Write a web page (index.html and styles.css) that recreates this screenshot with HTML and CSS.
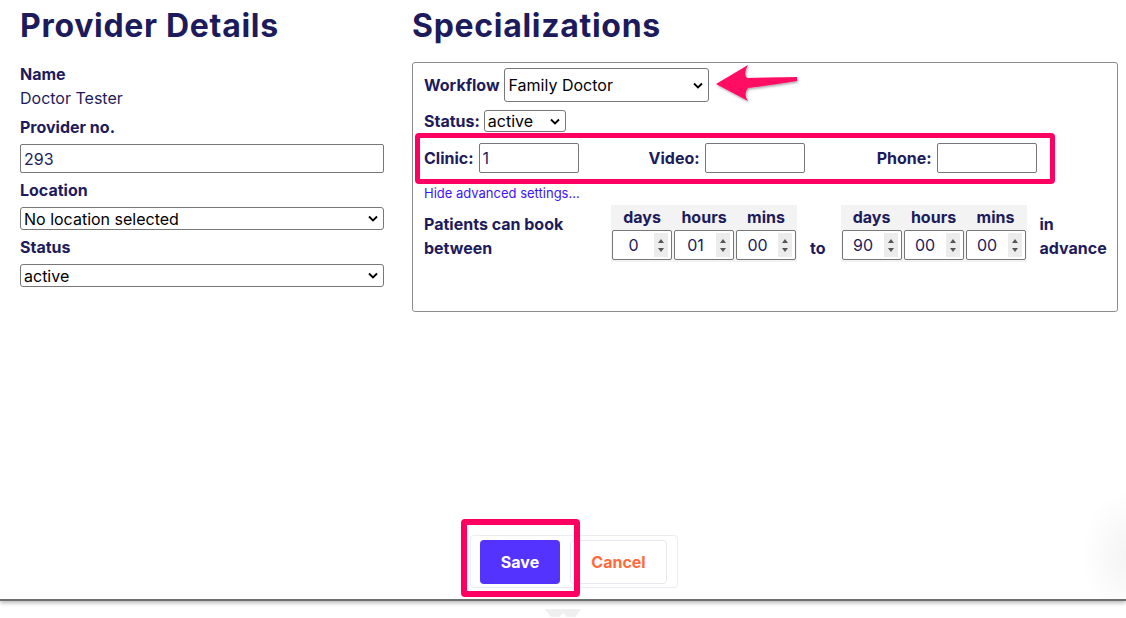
FILE: index.html
```html
<!DOCTYPE html>
<html>
<head>
<meta charset="utf-8">
<link rel="stylesheet" href="styles.css">
</head>
<body>
<div class="sheet">
  <div class="columns">
    <section class="left">
      <h1 class="title">Provider Details</h1>
      <div class="lbl first">Name</div>
      <div class="val">Doctor Tester</div>
      <div class="lbl">Provider no.</div>
      <input class="text-in wide" type="text" value="293">
      <div class="lbl">Location</div>
      <select class="sel wide-sel"><option>No location selected</option></select>
      <div class="lbl">Status</div>
      <select class="sel wide-sel"><option>active</option></select>
    </section>
    <section class="right">
      <h1 class="title">Specializations</h1>
      <div class="spec-box">
        <div class="row workflow-row">
          <span class="lbl-inline">Workflow</span>
          <select class="sel workflow-sel"><option>Family Doctor</option></select>
          <svg class="arrow" width="86" height="42" viewBox="0 0 86 42">
            <defs>
              <filter id="sh" x="-20%" y="-30%" width="140%" height="160%">
                <feDropShadow dx="1" dy="1.5" stdDeviation="1.2" flood-color="#000" flood-opacity="0.35"/>
              </filter>
            </defs>
            <path d="M3,21 L35,2 Q30,11 34,15 L84,14 L84,18 Q60,22 35,25 Q30,31 35,38 Z" fill="#ff0a64" filter="url(#sh)"/>
          </svg>
        </div>
        <div class="row status-row">
          <span class="lbl-inline">Status:</span>
          <select class="sel status-sel"><option>active</option></select>
        </div>
        <div class="highlight-box">
          <div class="field"><span class="lbl-inline">Clinic:</span><input class="text-in small" type="text" value="1"></div>
          <div class="field"><span class="lbl-inline">Video:</span><input class="text-in small" type="text" value=""></div>
          <div class="field"><span class="lbl-inline">Phone:</span><input class="text-in small" type="text" value=""></div>
        </div>
        <a class="adv-link" href="#">Hide advanced settings...</a>
        <div class="book-row">
          <div class="book-lbl">Patients can book between</div>
          <table class="dur">
            <tr><th>days</th><th>hours</th><th>mins</th></tr>
            <tr>
              <td><div class="num"><span class="num-val">0</span><span class="spin"><i class="up"></i><i class="down"></i></span></div></td>
              <td><div class="num"><span class="num-val">01</span><span class="spin"><i class="up"></i><i class="down"></i></span></div></td>
              <td><div class="num"><span class="num-val">00</span><span class="spin"><i class="up"></i><i class="down"></i></span></div></td>
            </tr>
          </table>
          <div class="to">to</div>
          <table class="dur">
            <tr><th>days</th><th>hours</th><th>mins</th></tr>
            <tr>
              <td><div class="num"><span class="num-val">90</span><span class="spin"><i class="up"></i><i class="down"></i></span></div></td>
              <td><div class="num"><span class="num-val">00</span><span class="spin"><i class="up"></i><i class="down"></i></span></div></td>
              <td><div class="num"><span class="num-val">00</span><span class="spin"><i class="up"></i><i class="down"></i></span></div></td>
            </tr>
          </table>
          <div class="advance">in advance</div>
        </div>
      </div>
    </section>
  </div>
  <div class="footer">
    <div class="btn-group">
      <button class="btn save">Save</button>
      <button class="btn cancel">Cancel</button>
      <div class="save-mark"></div>
    </div>
  </div>
  <div class="edge-shade"></div>
</div>
<div class="below">
  <svg class="chev" width="36" height="8" viewBox="0 0 36 8"><path d="M0,0 L36,0 L30,8 L22,8 L18,4 L14,8 L6,8 Z" fill="#efefef"/></svg>
</div>
</body>
</html>
```
FILE: styles.css
```css
* { box-sizing: border-box; }
html, body { margin: 0; padding: 0; background: #fff; }
body {
  font-family: "Inter", "Noto Sans", sans-serif;
  color: #1d1b5b;
  width: 1126px;
  height: 618px;
  overflow: hidden;
}
.sheet {
  position: relative;
  height: 601px;
  border-bottom: 2px solid #6e6e6e;
  box-shadow: 0 2px 4px rgba(0,0,0,0.28);
  display: flex;
  flex-direction: column;
  background: #fff;
}
.columns {
  display: flex;
  padding-left: 20px;
  gap: 28px;
}
.left { width: 364px; }
.right { width: 706px; }
.title {
  font-family: "Inter", sans-serif;
  font-weight: 700;
  font-size: 32px;
  line-height: 38px;
  margin: 7px 0 0 0;
  height: 55px;
  color: #1d1b5b;
  letter-spacing: 0.7px;
}
.lbl {
  font-weight: 700;
  font-size: 16px;
  line-height: 24px;
  margin-top: 5px;
}
.lbl.first { margin-top: 0; }
.val { font-size: 16px; line-height: 24px; }
.text-in {
  font-family: "Inter", sans-serif;
  font-size: 16px;
  color: #1d1b5b;
  border: 1px solid #777;
  border-radius: 2px;
  padding: 0 3px;
  background: #fff;
  outline: none;
}
.text-in.wide { display: block; width: 364px; height: 29px; margin-top: 5px; }
.sel {
  -webkit-appearance: none;
  appearance: none;
  font-family: "Inter", sans-serif;
  font-size: 16px;
  color: #000;
  border: 1px solid #777;
  border-radius: 3px;
  background: #fff url("data:image/svg+xml;utf8,<svg xmlns='http://www.w3.org/2000/svg' width='10' height='7' viewBox='0 0 10 7'><path d='M1 1.5 L5 5.5 L9 1.5' fill='none' stroke='black' stroke-width='1.8'/></svg>") no-repeat right 5px center;
  padding: 0 3px;
  outline: none;
}
.wide-sel { display: block; width: 364px; height: 23px; margin-top: 5px; }
.spec-box {
  border: 1px solid #8c8c8c;
  border-radius: 3px;
  height: 250px;
  padding: 5px 0 0 11px;
}
.row { display: flex; align-items: center; }
.lbl-inline { font-weight: 700; font-size: 16px; line-height: 24px; }
.workflow-row .lbl-inline { margin-right: 4px; }
.workflow-sel { width: 205px; height: 34px; padding-left: 4px; }
.arrow { margin: -8px 0 -6px 4px; }
.status-row { margin-top: 7px; }
.status-row .lbl-inline { margin-right: 4px; }
.status-sel { width: 82px; height: 22px; }
.highlight-box {
  margin-left: -9px;
  width: 640px;
  height: 51px;
  border: 5px solid #ff0062;
  border-radius: 4px;
  padding: 5px 0 0 4px;
  display: flex;
  gap: 70px;
}
.field { display: flex; align-items: center; gap: 5px; height: 30px; }
.field:last-child { margin-left: 2px; }
.text-in.small { width: 100px; height: 30px; }
.adv-link {
  display: block;
  font-size: 13px;
  line-height: 18px;
  color: #3d12ff;
  text-decoration: none;
  margin-top: 0;
}
.book-row { display: flex; align-items: flex-start; margin-top: 3px; }
.book-lbl {
  width: 170px;
  margin-right: 17px;
  font-weight: 700;
  font-size: 16px;
  line-height: 24px;
  padding-top: 7px;
}
.dur {
  border-collapse: separate;
  border-spacing: 0;
  background: #f3f3f3;
  margin: 0;
}
.dur th {
  font-weight: 700;
  font-size: 16px;
  line-height: 24px;
  padding: 0 1px;
  text-align: center;
}
.dur td { padding: 1px 1px 2px 1px; }
.num {
  width: 60px;
  height: 30px;
  border: 1px solid #777;
  border-radius: 2px;
  background: #fff;
  display: flex;
  align-items: center;
  padding: 2px 3px 2px 0;
}
.num-val {
  flex: 1;
  text-align: center;
  font-size: 16px;
  color: #1d1b5b;
}
.spin {
  width: 14px;
  height: 24px;
  background: #ececec;
  display: flex;
  flex-direction: column;
  align-items: center;
  justify-content: center;
  gap: 5px;
}
.spin i { display: block; width: 0; height: 0; border-left: 3.5px solid transparent; border-right: 3.5px solid transparent; }
.spin .up { border-bottom: 4px solid #555; }
.spin .down { border-top: 4px solid #555; }
.to {
  font-weight: 700;
  font-size: 16px;
  line-height: 24px;
  padding-top: 31px;
  margin: 0 15px 0 13px;
}
.advance {
  width: 72px;
  margin-left: 13px;
  font-weight: 700;
  font-size: 16px;
  line-height: 24px;
  padding-top: 7px;
}
.footer {
  margin-top: auto;
  padding: 0 0 11px 470px;
}
.btn-group {
  position: relative;
  display: flex;
  gap: 10px;
  width: 208px;
  height: 53px;
  border: 1px solid #ececf3;
  border-radius: 4px;
  padding: 4px 0 0 9px;
}
.btn {
  font-family: "Inter", sans-serif;
  font-weight: 700;
  font-size: 16px;
  height: 44px;
  border-radius: 4px;
  cursor: pointer;
}
.save { width: 80px; background: #5533ff; color: #fff; border: none; }
.cancel { width: 97px; background: #fff; color: #ff6b3d; border: 1px solid #e8e8f0; }
.save-mark {
  position: absolute;
  left: -10px;
  top: -17px;
  width: 119px;
  height: 78px;
  border: 6px solid #ff0062;
  border-radius: 4px;
  pointer-events: none;
}
.edge-shade {
  position: absolute;
  right: 0;
  bottom: 0;
  width: 45px;
  height: 110px;
  background: radial-gradient(ellipse at 100% 60%, rgba(0,0,0,0.045), rgba(0,0,0,0) 70%);
}
.below { height: 15px; padding-left: 545px; padding-top: 8px; }
.chev { display: block; }
```
